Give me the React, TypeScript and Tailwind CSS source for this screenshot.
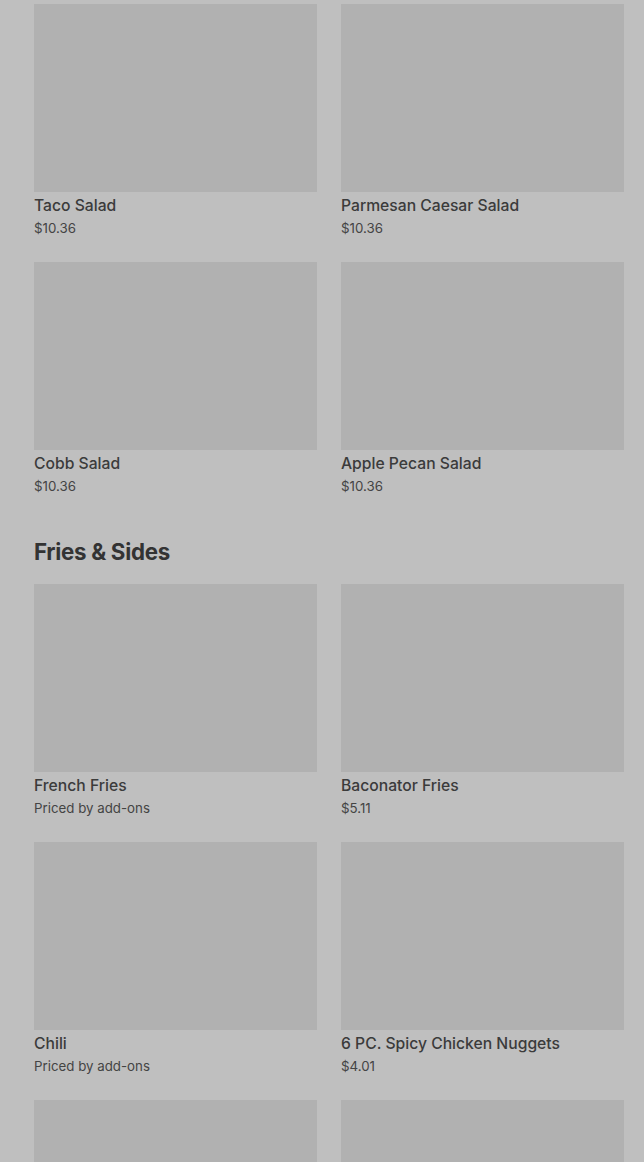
import React from "react";

type Item = { name: string; price: string };

const salads: Item[] = [
  { name: "Taco Salad", price: "$10.36" },
  { name: "Parmesan Caesar Salad", price: "$10.36" },
  { name: "Cobb Salad", price: "$10.36" },
  { name: "Apple Pecan Salad", price: "$10.36" },
];

const fries: Item[] = [
  { name: "French Fries", price: "Priced by add-ons" },
  { name: "Baconator Fries", price: "$5.11" },
  { name: "Chili", price: "Priced by add-ons" },
  { name: "6 PC. Spicy Chicken Nuggets", price: "$4.01" },
  { name: "", price: "" },
  { name: "", price: "" },
];

function Card({ item }: { item: Item }) {
  return (
    <div className="flex flex-col">
      <div className="h-[188px] w-full bg-[#b1b1b1]" />
      <div className="mt-[4px] text-[15.7px] leading-[20px] font-medium text-[#3b3b3b]">{item.name}</div>
      <div className="mt-[2px] text-[13.3px] leading-[20px] text-[#444444]">{item.price}</div>
    </div>
  );
}

export default function App() {
  return (
    <div
      className="min-h-[1162px] w-full bg-[#bfbfbf] pl-[34px] pr-[20px] pt-[4px] overflow-hidden"
      style={{ fontFamily: "Inter, 'Noto Sans', sans-serif" }}
    >
      <div className="grid grid-cols-2 gap-x-6 gap-y-6">
        {salads.map((it, i) => (
          <Card key={i} item={it} />
        ))}
      </div>
      <h2 className="mt-10 mb-4 text-[22.3px] leading-[32px] font-bold tracking-[-0.3px] text-[#333333]">
        Fries &amp; Sides
      </h2>
      <div className="grid grid-cols-2 gap-x-6 gap-y-6">
        {fries.map((it, i) => (
          <Card key={i} item={it} />
        ))}
      </div>
    </div>
  );
}
